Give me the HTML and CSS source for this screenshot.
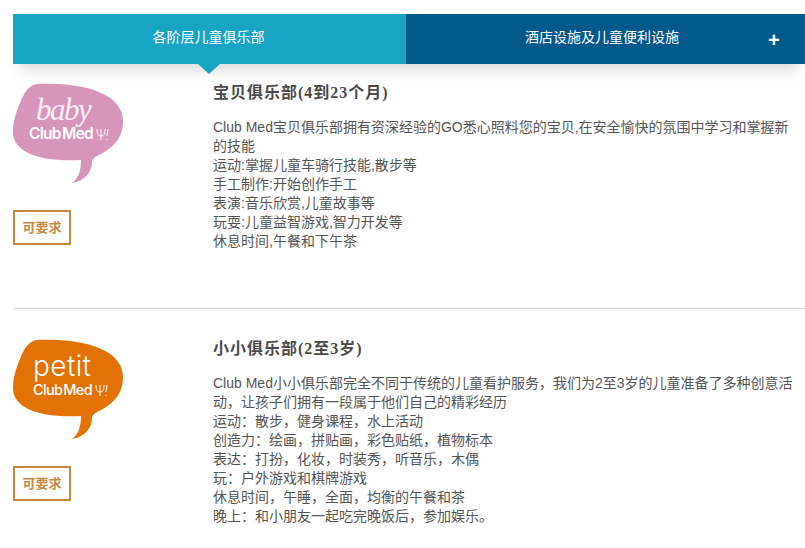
FILE: index.html
```html
<!DOCTYPE html>
<html lang="zh-CN">
<head>
<meta charset="utf-8">
<title>儿童俱乐部</title>
<link rel="stylesheet" href="styles.css">
</head>
<body>
<nav class="tabs">
  <div class="tab tab-active">各阶层儿童俱乐部</div>
  <div class="tab tab-other">酒店设施及儿童便利设施<span class="plus">+</span></div>
</nav>
<main class="clubs">
  <section class="club club-first">
    <div class="side">
      <svg class="logo" viewBox="0 0 111 100" width="111" height="100" aria-label="baby Club Med">
        <path class="blob-baby" d="M24 0C40 -1 70 0 88 9C103 15 110 26 110 37C110 52 103 61 90 69C83 72 79 75 79 78C79 88 72 97 59 99C65 95 68 87 68 76C50 77 24 76 10 66C2 60 0 54 0 48C0 36 4 26 9 14C13 6 17 1 24 0Z"/>
        <text class="logo-script" x="23" y="36">baby</text>
        <text class="logo-brand" x="16" y="55">Club Med</text>
        <path class="logo-mark" d="M88 45V56M84 45C84 50 85 52 88 52M92 45C92 50 91 52 88 52M95 45L94 52M94 55V56"/>
      </svg>
      <div class="badge">可要求</div>
    </div>
    <div class="info">
      <h2 class="title">宝贝俱乐部(4到23个月)</h2>
      <p class="desc">Club Med宝贝俱乐部拥有资深经验的GO悉心照料您的宝贝,在安全愉快的氛围中学习和掌握新的技能<br>运动:掌握儿童车骑行技能,散步等<br>手工制作:开始创作手工<br>表演:音乐欣赏,儿童故事等<br>玩耍:儿童益智游戏,智力开发等<br>休息时间,午餐和下午茶</p>
    </div>
  </section>
  <section class="club">
    <div class="side">
      <svg class="logo" viewBox="0 0 111 100" width="111" height="100" aria-label="petit Club Med">
        <path class="blob-petit" d="M24 0C40 -1 70 0 88 9C103 15 110 26 110 37C110 52 103 61 90 69C83 72 79 75 79 78C79 88 72 97 59 99C65 95 68 87 68 76C50 77 24 76 10 66C2 60 0 54 0 48C0 36 4 26 9 14C13 6 17 1 24 0Z"/>
        <text class="logo-round" x="20" y="36">petit</text>
        <text class="logo-brand logo-brand-small" x="20" y="55">Club Med</text>
        <path class="logo-mark" d="M87 45V56M83 45C83 50 84 52 87 52M91 45C91 50 90 52 87 52M94 45L93 52M93 55V56"/>
      </svg>
      <div class="badge">可要求</div>
    </div>
    <div class="info">
      <h2 class="title">小小俱乐部(2至3岁)</h2>
      <p class="desc">Club Med小小俱乐部完全不同于传统的儿童看护服务，我们为2至3岁的儿童准备了多种创意活动，让孩子们拥有一段属于他们自己的精彩经历<br>运动：散步，健身课程，水上活动<br>创造力：绘画，拼贴画，彩色贴纸，植物标本<br>表达：打扮，化妆，时装秀，听音乐，木偶<br>玩：户外游戏和棋牌游戏<br>休息时间，午睡，全面，均衡的午餐和茶<br>晚上：和小朋友一起吃完晚饭后，参加娱乐。</p>
    </div>
  </section>
</main>
</body>
</html>
```
FILE: styles.css
```css
html, body {
  margin: 0;
  padding: 0;
  background: #fff;
}
body {
  height: 548px;
  overflow: hidden;
  padding-top: 14px;
  box-sizing: border-box;
  font-family: "Liberation Sans", "Noto Sans CJK SC", sans-serif;
  font-size: 14px;
  color: #4e4e4e;
}
.tabs {
  display: flex;
  margin-left: 13px;
  height: 50px;
  box-shadow: 0 12px 14px -6px rgba(0, 0, 0, 0.14);
  position: relative;
}
.tab {
  position: relative;
  display: flex;
  align-items: center;
  justify-content: center;
  color: #fff;
  padding-bottom: 6px;
  box-sizing: border-box;
}
.tab-active {
  width: 393px;
  background: #18a5c4;
  padding-right: 2px;
}
.tab-active::after {
  content: "";
  position: absolute;
  left: 185px;
  top: 50px;
  border-left: 11px solid transparent;
  border-right: 11px solid transparent;
  border-top: 10px solid #18a5c4;
}
.tab-other {
  flex: 1;
  background: #02598c;
  padding-right: 7px;
}
.plus {
  position: absolute;
  left: 362px;
  top: 14px;
  font-size: 20px;
  line-height: 24px;
  font-weight: bold;
}
.clubs {
  margin-left: 13px;
}
.club {
  display: flex;
}
.club-first {
  height: 218px;
  padding-top: 20px;
  padding-bottom: 6px;
  border-bottom: 1px solid #d9d9d9;
  margin-bottom: 31px;
}
.side {
  width: 200px;
  flex: none;
}
.logo {
  display: block;
  overflow: visible;
}
.blob-baby { fill: #d795bb; }
.blob-petit { fill: #e37206; }
.logo-script {
  font-family: "Liberation Serif", serif;
  font-style: italic;
  font-size: 31px;
  letter-spacing: -1.5px;
  fill: #fbeef5;
}
.logo-round {
  font-family: "Inter", sans-serif;
  font-weight: 300;
  font-size: 28px;
  letter-spacing: 0.4px;
  fill: #fff;
}
.logo-brand {
  font-family: "Inter", sans-serif;
  font-weight: 600;
  font-size: 15.5px;
  letter-spacing: -0.7px;
  word-spacing: -2px;
  fill: #fff;
}
.logo-brand-small {
  font-size: 14.5px;
  font-weight: 500;
}
.logo-mark {
  fill: none;
  stroke: #fff;
  stroke-width: 1;
}
.badge {
  margin-top: 26px;
  width: 58px;
  height: 35px;
  box-sizing: border-box;
  border: 2px solid #c8873f;
  padding-bottom: 3px;
  display: flex;
  align-items: center;
  justify-content: center;
  font-size: 13px;
  font-weight: bold;
  color: #c8873f;
}
.info {
  width: 580px;
  flex: none;
}
.title {
  margin: 0 0 16px;
  font-family: "Liberation Serif", "Noto Sans CJK SC", serif;
  font-size: 16px;
  line-height: 18px;
  font-weight: bold;
  color: #4a4a4a;
  letter-spacing: 1px;
}
.desc {
  margin: 0;
  line-height: 19px;
  color: #555;
}
```
